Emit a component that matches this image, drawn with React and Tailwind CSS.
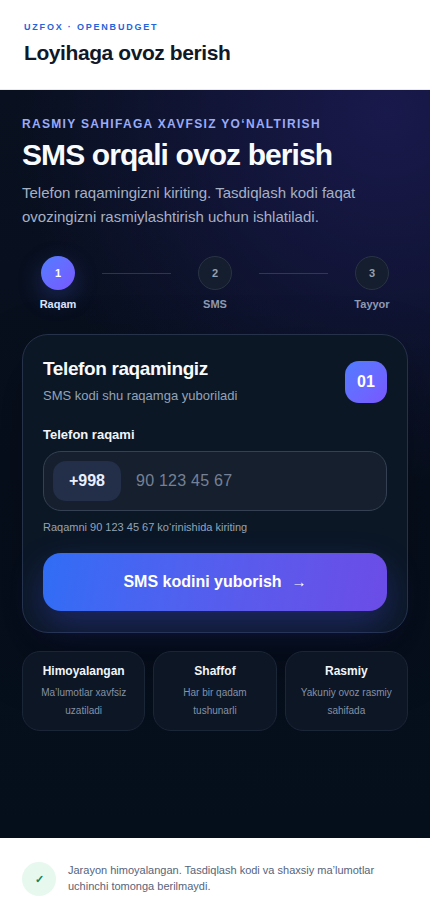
import { Fragment } from 'react'

const steps = [
  { id: 1, label: 'Raqam', active: true },
  { id: 2, label: 'SMS' },
  { id: 3, label: 'Tayyor' },
]

const trustItems = [
  { title: 'Himoyalangan', text: 'Ma’lumotlar xavfsiz uzatiladi' },
  { title: 'Shaffof', text: 'Har bir qadam tushunarli' },
  { title: 'Rasmiy', text: 'Yakuniy ovoz rasmiy sahifada' },
]

function Header() {
  return (
    <header className="border-b border-[#e4ebf5] bg-white px-6 pt-5 pb-[22px]">
      <p className="text-[9px] leading-[14px] font-bold tracking-[0.2em] text-[#2563d9]">UZFOX · OPENBUDGET</p>
      <p className="mt-[5px] text-[21px] leading-[28px] font-bold tracking-[-0.02em] text-[#111827]">Loyihaga ovoz berish</p>
    </header>
  )
}

function Steps() {
  return (
    <ol className="mt-[27px] flex items-start gap-2">
      {steps.map((step, i) => (
        <Fragment key={step.id}>
          {i > 0 && <li aria-hidden="true" className="mt-[17px] h-px flex-1 bg-[#94a3b8]/25" />}
          <li className="flex w-[72px] flex-col items-center gap-[7px] text-[11px] leading-[14px] font-bold">
            <span
              className={
                step.active
                  ? 'flex size-[34px] items-center justify-center rounded-full bg-linear-135 from-[#4f7cff] to-[#7857ff] text-white shadow-[0_8px_24px_rgba(79,108,255,0.28)]'
                  : 'flex size-[34px] items-center justify-center rounded-full border border-[#283344] bg-[#151e2e] text-[#94a0b3]'
              }
            >
              {step.id}
            </span>
            <span className={step.active ? 'text-[#dbe4ff]' : 'text-[#8e9ab0]'}>{step.label}</span>
          </li>
        </Fragment>
      ))}
    </ol>
  )
}

function PhoneCard() {
  return (
    <form
      onSubmit={(e) => e.preventDefault()}
      className="mt-[23px] rounded-[26px] border border-[#25324a] bg-[#0b1725] px-5 pt-[22px] pb-[21px] shadow-[0_24px_60px_rgba(0,0,0,0.3)]"
    >
      <div className="flex items-center justify-between gap-4">
        <div>
          <h2 className="text-[19px] leading-6 font-bold tracking-[-0.02em] text-[#f8fafc]">Telefon raqamingiz</h2>
          <p className="mt-1 text-[13px] leading-[22px] text-[#94a3b8]">SMS kodi shu raqamga yuboriladi</p>
        </div>
        <span className="flex size-[42px] shrink-0 items-center justify-center rounded-[14px] bg-linear-135 from-[#4f7cff] to-[#7857ff] text-base font-bold text-white">
          01
        </span>
      </div>

      <label htmlFor="phone" className="mt-[18px] block text-[13px] leading-5 font-bold text-[#f1f5f9]">
        Telefon raqami
      </label>
      <div className="mt-1.5 flex h-[60px] items-center rounded-[18px] border border-[#354152] bg-[#151f2e] px-[9px]">
        <span className="flex h-10 w-[68px] shrink-0 items-center justify-center rounded-[13px] bg-[#232e48] text-base font-bold text-[#e8efff]">
          +998
        </span>
        <input
          id="phone"
          type="tel"
          inputMode="numeric"
          placeholder="90 123 45 67"
          aria-describedby="phone-hint"
          className="h-10 w-full min-w-0 bg-transparent pl-[15px] text-base tracking-[0.015em] text-white outline-none placeholder:text-[#758195]"
        />
      </div>
      <p id="phone-hint" className="mt-2 text-[11px] leading-4 text-[#94a3b8]">
        Raqamni 90 123 45 67 ko‘rinishida kiriting
      </p>

      <button
        type="submit"
        className="mt-[18px] flex h-[58px] w-full items-center justify-center gap-2.5 rounded-[18px] bg-linear-100 from-[#2f6df6] to-[#6b4ce6] text-base font-bold text-white shadow-[0_14px_34px_rgba(67,74,230,0.32)]"
      >
        SMS kodini yuborish
        <span aria-hidden="true" className="text-[15px]">→</span>
      </button>
    </form>
  )
}

function TrustCards() {
  return (
    <ul className="mt-[18px] grid grid-cols-3 gap-2">
      {trustItems.map((item) => (
        <li key={item.title} className="rounded-[18px] border border-[#1a2536] bg-[#0c1625] px-2 pt-[11px] pb-2.5 text-center">
          <h3 className="text-xs leading-4 font-bold text-[#f1f5f9]">{item.title}</h3>
          <p className="mt-[5px] text-[10px] leading-[18px] text-[#8491a6]">{item.text}</p>
        </li>
      ))}
    </ul>
  )
}

function Footer() {
  return (
    <footer className="flex items-start gap-3 bg-white px-[22px] py-6">
      <span
        aria-hidden="true"
        className="flex size-[34px] shrink-0 items-center justify-center rounded-full bg-[#e7f8ef] text-[11px] leading-4 font-bold text-[#16855a]"
      >
        ✓
      </span>
      <p className="text-[11px] leading-4 text-[#56647a]">
        Jarayon himoyalangan. Tasdiqlash kodi va shaxsiy ma’lumotlar uchinchi tomonga berilmaydi.
      </p>
    </footer>
  )
}

export default function App() {
  return (
    <div className="flex min-h-screen flex-col bg-white font-['Liberation_Sans',Arial,sans-serif]">
      <Header />
      <main className="flex-1 bg-[#050e1b] bg-[radial-gradient(circle_at_90%_3%,#19194c_0,transparent_370px),linear-gradient(180deg,#09101f_0,#050e1b_100%)] px-[22px] pt-6 pb-6">
        <p className="text-xs leading-5 font-bold tracking-[0.11em] text-[#9aabf8]">RASMIY SAHIFAGA XAVFSIZ YO‘NALTIRISH</p>
        <h1 className="mt-1 text-[30px] leading-[34px] font-bold tracking-[-0.03em] text-[#f8fbff]">SMS orqali ovoz berish</h1>
        <p className="mt-[9px] text-[15px] leading-6 text-[#a6b0c5]">
          Telefon raqamingizni kiriting. Tasdiqlash kodi faqat ovozingizni rasmiylashtirish uchun ishlatiladi.
        </p>
        <Steps />
        <PhoneCard />
        <TrustCards />
      </main>
      <Footer />
    </div>
  )
}
